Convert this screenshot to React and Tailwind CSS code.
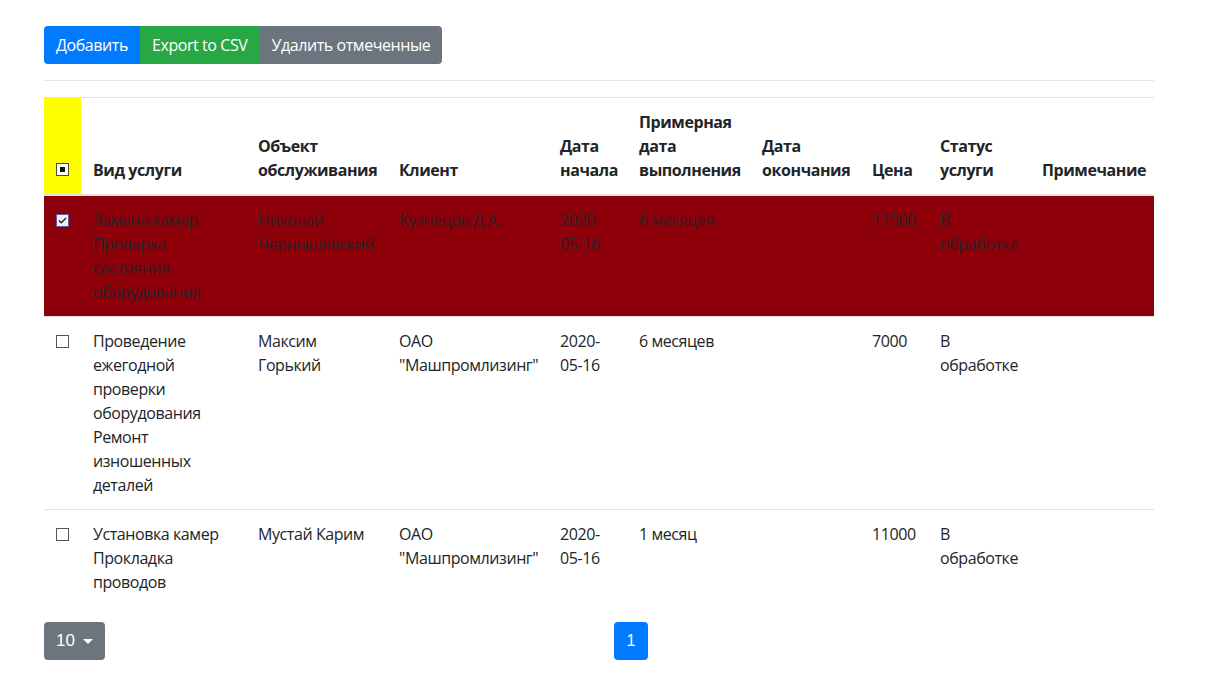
import { useState } from 'react';

const rows = [
    {
        id: 1,
        service: 'Замена камер Проверка состояния оборудования',
        object: 'Николай Чернышевский',
        client: 'Кузнецов Д.А.',
        start: '2020-05-16',
        estimate: '6 месяцев',
        end: '',
        price: '11500',
        status: 'В обработке',
        note: '',
    },
    {
        id: 2,
        service: 'Проведение ежегодной проверки оборудования Ремонт изношенных деталей',
        object: 'Максим Горький',
        client: 'ОАО "Машпромлизинг"',
        start: '2020-05-16',
        estimate: '6 месяцев',
        end: '',
        price: '7000',
        status: 'В обработке',
        note: '',
    },
    {
        id: 3,
        service: 'Установка камер Прокладка проводов',
        object: 'Мустай Карим',
        client: 'ОАО "Машпромлизинг"',
        start: '2020-05-16',
        estimate: '1 месяц',
        end: '',
        price: '11000',
        status: 'В обработке',
        note: '',
    },
];

function Checkbox({ state }) {
    if (state === 'indeterminate') {
        return (
            <span className="flex h-[13px] w-[13px] items-center justify-center border border-[#4d4d33] bg-white">
                <span className="h-[5px] w-[5px] bg-[#111]" />
            </span>
        );
    }
    if (state === 'checked') {
        return (
            <span className="flex h-[13px] w-[13px] items-center justify-center border border-[#5c5c99] bg-[#f2f2f8]">
                <svg width="9" height="7" viewBox="0 0 9 7" fill="none">
                    <path d="M1 3.5L3.3 5.8L8 1" stroke="#222" strokeWidth="1.4" />
                </svg>
            </span>
        );
    }
    return <span className="block h-[13px] w-[13px] border border-[#555] bg-white" />;
}

export default function App() {
    const [selected] = useState([1]);

    return (
        <div className="min-h-[685px] bg-white font-['Open_Sans',sans-serif] text-[16px] leading-6 text-[#212529] tracking-[-0.42px]">
            <div className="ml-[44px] w-[1110px] pt-[26px]">
                <div className="flex">
                    <button className="h-[38px] rounded-l-[4px] bg-[#007bff] px-3 text-white">Добавить</button>
                    <button className="h-[38px] bg-[#28a745] px-3 text-white">Export to CSV</button>
                    <button className="h-[38px] rounded-r-[4px] bg-[#6c757d] px-3 text-white">Удалить отмеченные</button>
                </div>

                <hr className="mt-4 mb-4 border-t border-[#e5e5e5]" />

                <table className="w-full table-fixed border-collapse">
                    <colgroup>
                        <col className="w-[37px]" />
                        <col className="w-[165px]" />
                        <col className="w-[141px]" />
                        <col className="w-[161px]" />
                        <col className="w-[79px]" />
                        <col className="w-[123px]" />
                        <col className="w-[110px]" />
                        <col className="w-[68px]" />
                        <col className="w-[102px]" />
                        <col className="w-[124px]" />
                    </colgroup>
                    <thead>
                        <tr className="border-t border-[#dee2e6] align-bottom font-bold">
                            <th className="border-b-2 border-[#dee2e6] bg-[#ffff00] px-3 pb-[18px] text-left">
                                <Checkbox state="indeterminate" />
                            </th>
                            <th className="border-b-2 border-[#dee2e6] p-3 text-left">Вид услуги</th>
                            <th className="border-b-2 border-[#dee2e6] p-3 text-left">Объект обслуживания</th>
                            <th className="border-b-2 border-[#dee2e6] p-3 text-left">Клиент</th>
                            <th className="border-b-2 border-[#dee2e6] p-3 text-left">Дата начала</th>
                            <th className="border-b-2 border-[#dee2e6] p-3 text-left">Примерная дата выполнения</th>
                            <th className="border-b-2 border-[#dee2e6] p-3 text-left">Дата окончания</th>
                            <th className="border-b-2 border-[#dee2e6] p-3 text-left">Цена</th>
                            <th className="border-b-2 border-[#dee2e6] p-3 text-left">Статус услуги</th>
                            <th className="border-b-2 border-[#dee2e6] p-3 text-left">Примечание</th>
                        </tr>
                    </thead>
                    <tbody>
                        {rows.map((row, i) => {
                            const isSelected = selected.includes(row.id);
                            return (
                                <tr
                                    key={row.id}
                                    className={`align-top ${i > 0 ? 'border-t border-[#dee2e6]' : ''} ${
                                        isSelected ? 'bg-[#8e0009]' : ''
                                    }`}
                                >
                                    <td className="px-3 pt-[18px]">
                                        <Checkbox state={isSelected ? 'checked' : 'unchecked'} />
                                    </td>
                                    <td className="p-3">{row.service}</td>
                                    <td className="p-3">{row.object}</td>
                                    <td className="p-3">{row.client}</td>
                                    <td className="p-3">{row.start}</td>
                                    <td className="p-3">{row.estimate}</td>
                                    <td className="p-3">{row.end}</td>
                                    <td className="p-3">{row.price}</td>
                                    <td className="p-3">{row.status}</td>
                                    <td className="p-3">{row.note}</td>
                                </tr>
                            );
                        })}
                    </tbody>
                </table>

                <div className="mt-4 grid grid-cols-2">
                    <div>
                        <button className="flex h-[38px] items-center gap-[8px] rounded-[4px] bg-[#6c757d] pl-[12px] pr-[12px] font-['Liberation_Sans',sans-serif] text-[17px] tracking-normal text-white">
                            10
                            <span className="h-0 w-0 border-x-[5px] border-t-[5px] border-x-transparent border-t-white" />
                        </button>
                    </div>
                    <div className="pl-[15px]">
                        <span className="flex h-[38px] w-[34px] items-center justify-center rounded-[4px] bg-[#007bff] font-['Liberation_Sans',sans-serif] tracking-normal text-white">
                            1
                        </span>
                    </div>
                </div>
            </div>
        </div>
    );
}
